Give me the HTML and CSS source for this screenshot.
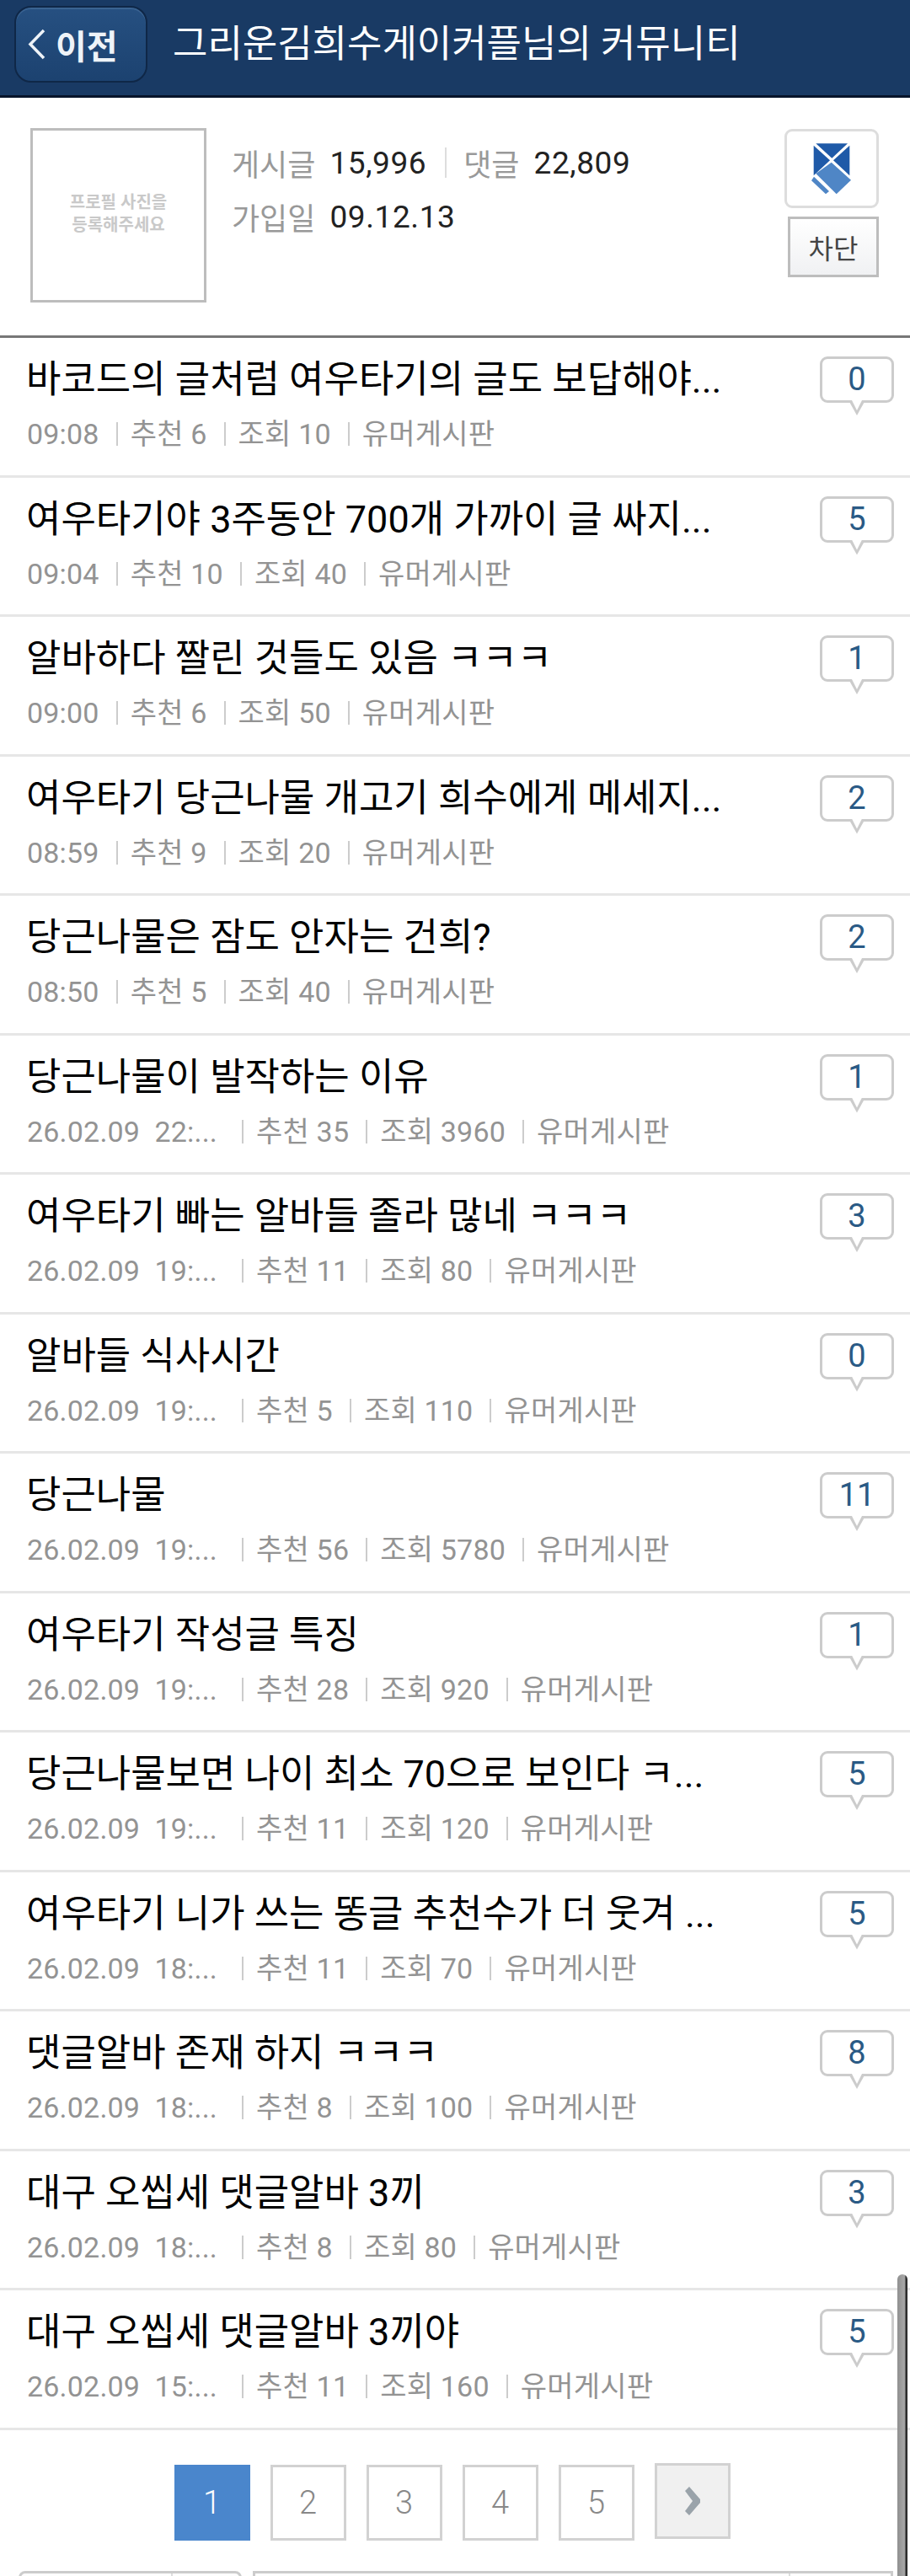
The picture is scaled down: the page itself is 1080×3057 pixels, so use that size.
FILE: index.html
```html
<!DOCTYPE html>
<html lang="ko">
<head>
<meta charset="utf-8">
<title>그리운김희수게이커플님의 커뮤니티</title>
<link rel="stylesheet" href="styles.css">
</head>
<body>
<header class="topbar">
  <a class="back" href="#">
    <svg class="back-icon" viewBox="0 0 21 37" aria-hidden="true"><path d="M19 2 3 18.5 19 35"/></svg>
    <span>이전</span>
  </a>
  <h1 class="topbar-title">그리운김희수게이커플님의 커뮤니티</h1>
</header>

<section class="profile">
  <div class="photo">프로필 사진을<br>등록해주세요</div>
  <div class="info">
    <div class="stats">
      <span class="label">게시글</span><span class="value">15,996</span>
      <span class="divider"></span>
      <span class="label">댓글</span><span class="value">22,809</span>
    </div>
    <div class="stats">
      <span class="label">가입일</span><span class="value">09.12.13</span>
    </div>
  </div>
  <div class="actions">
    <a class="badge" href="#">
      <svg class="badge-icon" viewBox="0 0 48 62" aria-hidden="true">
        <path class="dark" d="M2.7 3.7 22 21.3 2.7 39.3Z"/>
        <path class="dark" d="M5.3 1.3H43L24.3 18.7Z"/>
        <path class="dark" d="M45.3 3.7V39.3L26 21.3Z"/>
        <path class="light" d="M23.7 23.7 47 44.7 29.7 61.3 5.3 37Z"/>
        <path class="light" d="M3 40.7 21 58 17 61.3 0 45.3Z"/>
      </svg>
    </a>
    <button class="block-btn" type="button">차단</button>
  </div>
</section>

<ul class="posts">
  <li class="post"><div class="post-main"><div class="post-title">바코드의 글처럼 여우타기의 글도 보답해야...</div><div class="meta"><span>09:08</span><span>추천 6</span><span>조회 10</span><span>유머게시판</span></div></div><div class="bubble">0</div></li>
  <li class="post"><div class="post-main"><div class="post-title">여우타기야 3주동안 700개 가까이 글 싸지...</div><div class="meta"><span>09:04</span><span>추천 10</span><span>조회 40</span><span>유머게시판</span></div></div><div class="bubble">5</div></li>
  <li class="post"><div class="post-main"><div class="post-title">알바하다 짤린 것들도 있음 ㅋㅋㅋ</div><div class="meta"><span>09:00</span><span>추천 6</span><span>조회 50</span><span>유머게시판</span></div></div><div class="bubble">1</div></li>
  <li class="post"><div class="post-main"><div class="post-title">여우타기 당근나물 개고기 희수에게 메세지...</div><div class="meta"><span>08:59</span><span>추천 9</span><span>조회 20</span><span>유머게시판</span></div></div><div class="bubble">2</div></li>
  <li class="post"><div class="post-main"><div class="post-title">당근나물은 잠도 안자는 건희?</div><div class="meta"><span>08:50</span><span>추천 5</span><span>조회 40</span><span>유머게시판</span></div></div><div class="bubble">2</div></li>
  <li class="post"><div class="post-main"><div class="post-title">당근나물이 발작하는 이유</div><div class="meta"><span class="date">26.02.09&nbsp; 22:...</span><span>추천 35</span><span>조회 3960</span><span>유머게시판</span></div></div><div class="bubble">1</div></li>
  <li class="post"><div class="post-main"><div class="post-title">여우타기 빠는 알바들 졸라 많네 ㅋㅋㅋ</div><div class="meta"><span class="date">26.02.09&nbsp; 19:...</span><span>추천 11</span><span>조회 80</span><span>유머게시판</span></div></div><div class="bubble">3</div></li>
  <li class="post"><div class="post-main"><div class="post-title">알바들 식사시간</div><div class="meta"><span class="date">26.02.09&nbsp; 19:...</span><span>추천 5</span><span>조회 110</span><span>유머게시판</span></div></div><div class="bubble">0</div></li>
  <li class="post"><div class="post-main"><div class="post-title">당근나물</div><div class="meta"><span class="date">26.02.09&nbsp; 19:...</span><span>추천 56</span><span>조회 5780</span><span>유머게시판</span></div></div><div class="bubble">11</div></li>
  <li class="post"><div class="post-main"><div class="post-title">여우타기 작성글 특징</div><div class="meta"><span class="date">26.02.09&nbsp; 19:...</span><span>추천 28</span><span>조회 920</span><span>유머게시판</span></div></div><div class="bubble">1</div></li>
  <li class="post"><div class="post-main"><div class="post-title">당근나물보면 나이 최소 70으로 보인다 ㅋ...</div><div class="meta"><span class="date">26.02.09&nbsp; 19:...</span><span>추천 11</span><span>조회 120</span><span>유머게시판</span></div></div><div class="bubble">5</div></li>
  <li class="post"><div class="post-main"><div class="post-title">여우타기 니가 쓰는 똥글 추천수가 더 웃겨 ...</div><div class="meta"><span class="date">26.02.09&nbsp; 18:...</span><span>추천 11</span><span>조회 70</span><span>유머게시판</span></div></div><div class="bubble">5</div></li>
  <li class="post"><div class="post-main"><div class="post-title">댓글알바 존재 하지 ㅋㅋㅋ</div><div class="meta"><span class="date">26.02.09&nbsp; 18:...</span><span>추천 8</span><span>조회 100</span><span>유머게시판</span></div></div><div class="bubble">8</div></li>
  <li class="post"><div class="post-main"><div class="post-title">대구 오씹세 댓글알바 3끼</div><div class="meta"><span class="date">26.02.09&nbsp; 18:...</span><span>추천 8</span><span>조회 80</span><span>유머게시판</span></div></div><div class="bubble">3</div></li>
  <li class="post"><div class="post-main"><div class="post-title">대구 오씹세 댓글알바 3끼야</div><div class="meta"><span class="date">26.02.09&nbsp; 15:...</span><span>추천 11</span><span>조회 160</span><span>유머게시판</span></div></div><div class="bubble">5</div></li>
</ul>

<nav class="pager">
  <a class="page current" href="#">1</a>
  <a class="page" href="#">2</a>
  <a class="page" href="#">3</a>
  <a class="page" href="#">4</a>
  <a class="page" href="#">5</a>
  <a class="page next" href="#">
    <svg class="next-icon" viewBox="0 0 18 34" aria-hidden="true"><path d="M0 5 5 0 18 15V19L5 34 0 29 9 17Z"/></svg>
  </a>
</nav>

<div class="search">
  <div class="search-select"><span class="select-cap"></span></div>
  <div class="search-input"><span class="input-cap"></span></div>
</div>

<div class="scrollbar"></div>
</body>
</html>
```

FILE: styles.css
```css
* { box-sizing: border-box; }

html {
  height: 3057px;
  overflow: hidden;
}

body {
  position: relative;
  margin: 0;
  height: 3057px;
  overflow: hidden;
  background: #fff;
  font-family: Roboto, "Noto Sans CJK KR", sans-serif;
}

a { color: inherit; text-decoration: none; }

/* Top bar */
.topbar {
  display: flex;
  align-items: flex-start;
  height: 116px;
  padding: 7px 0 0 17px;
  background: #193a64;
  border-bottom: 3px solid #06142a;
}

.back {
  display: flex;
  align-items: center;
  gap: 12px;
  width: 158px;
  height: 91px;
  padding-left: 14px;
  color: #eef3f8;
  font-size: 40px;
  font-weight: 700;
  background: linear-gradient(#265081, #1c4270);
  border: 2px solid #0f2747;
  border-radius: 20px;
  box-shadow: inset 0 2px 0 #3a6391;
}

.back-icon {
  flex: none;
  width: 21px;
  height: 37px;
  fill: none;
  stroke: #eef3f8;
  stroke-width: 3.5;
}

.topbar-title {
  margin: 0 0 0 30px;
  color: #fff;
  font-size: 45px;
  font-weight: 400;
  line-height: 92px;
  white-space: nowrap;
}

/* Member profile */
.profile {
  display: flex;
  height: 285px;
  padding: 36px 37px 0 36px;
  border-bottom: 3px solid #777;
}

.photo {
  flex: none;
  width: 209px;
  height: 207px;
  padding-top: 72px;
  color: #c9c9c9;
  font-size: 20px;
  font-weight: 700;
  line-height: 27px;
  text-align: center;
  border: 3px solid #bdbdbd;
}

.info {
  margin-left: 30px;
  padding-top: 16px;
}

.stats {
  display: flex;
  align-items: center;
  height: 50px;
  margin-bottom: 14px;
  font-size: 36px;
  white-space: nowrap;
}

.label { color: #999; }

.value {
  margin-left: 17px;
  color: #222;
  font-size: 37px;
  letter-spacing: 0.6px;
}

.divider {
  width: 2px;
  height: 36px;
  margin: 0 20px 0 22px;
  background: #ddd;
}

.actions {
  display: flex;
  flex-direction: column;
  align-items: flex-end;
  gap: 10px;
  margin-left: auto;
  padding-top: 1px;
}

.badge {
  display: flex;
  align-items: center;
  justify-content: center;
  width: 112px;
  height: 94px;
  background: #fff;
  border: 3px solid #ddd;
  border-radius: 9px;
}

.badge-icon {
  width: 48px;
  height: 62px;
}

.badge-icon .dark { fill: #1f5aa8; }
.badge-icon .light { fill: #4f86c6; }

.block-btn {
  width: 108px;
  height: 72px;
  padding: 0;
  color: #444;
  font-family: inherit;
  font-size: 32px;
  background: linear-gradient(#fff, #f0f1f3);
  border: 3px solid #bdbdbd;
}

/* Post list */
.posts {
  margin: 0;
  padding: 0;
  list-style: none;
}

.post {
  display: flex;
  justify-content: space-between;
  height: 165.5px;
  padding: 20px 19px 0 31px;
  border-bottom: 3px solid #e6e6e6;
}

.post-title {
  color: #000;
  font-size: 45px;
  line-height: 60px;
  white-space: nowrap;
}

.meta {
  display: flex;
  margin-top: 20px;
  margin-left: 1px;
  color: #939393;
  font-size: 34px;
  line-height: 28px;
  white-space: nowrap;
}

.meta span {
  padding-right: 20px;
  letter-spacing: 0.2px;
}

.meta span + span {
  padding-left: 15px;
  border-left: 2px solid #ccc;
}

.meta .date {
  width: 255px;
}

.bubble {
  position: relative;
  flex: none;
  width: 88px;
  height: 55px;
  margin-top: 2px;
  color: #2a5a85;
  font-size: 38px;
  line-height: 49px;
  text-align: center;
  background: #fff;
  border: 3px solid #ccc;
  border-radius: 9px;
}

/* Speech tail: a grey triangle with a white one laid inside it */
.bubble::before,
.bubble::after {
  content: "";
  position: absolute;
  left: 50%;
  clip-path: polygon(0 0, 100% 0, 50% 100%);
  transform: translateX(-50%);
}

.bubble::before {
  top: 49px;
  width: 20px;
  height: 18px;
  background: #ccc;
}

.bubble::after {
  top: 47px;
  width: 14px;
  height: 14px;
  background: #fff;
}

/* Pagination */
.pager {
  display: flex;
  justify-content: center;
  align-items: flex-start;
  gap: 24px;
  padding: 41px 7px 0 0;
}

.page {
  display: flex;
  align-items: center;
  justify-content: center;
  width: 90px;
  height: 90px;
  color: #888;
  font-size: 38px;
  font-weight: 300;
  border: 3px solid #d2d2d2;
}

.page.current {
  color: #fff;
  background: #4a86cc;
  border-color: #4a86cc;
}

.page.next {
  margin-top: -2px;
  background: #f0f0f0;
}

.next-icon {
  width: 18px;
  height: 34px;
  fill: #9aa3aa;
}

/* Search controls, cut off by the window edge */
.search {
  display: flex;
  gap: 13px;
  margin-top: 36px;
  padding-left: 22px;
}

.search-select,
.search-input {
  display: flex;
  justify-content: flex-end;
  height: 60px;
  border: 3px solid #ccc;
}

.search-select {
  width: 265px;
  border-radius: 8px 8px 0 0;
}

.search-input {
  width: 760px;
}

.select-cap,
.input-cap {
  border-left: 2px solid #ddd;
}

.select-cap { width: 81px; }
.input-cap { width: 121px; }

/* Overlay scroll thumb */
.scrollbar {
  position: absolute;
  top: 2699px;
  right: 3px;
  width: 12px;
  height: 370px;
  background: linear-gradient(90deg, #8f8f8f, #a8a8a8 70%, #333 85%, #222);
  border-radius: 6px;
}
```
